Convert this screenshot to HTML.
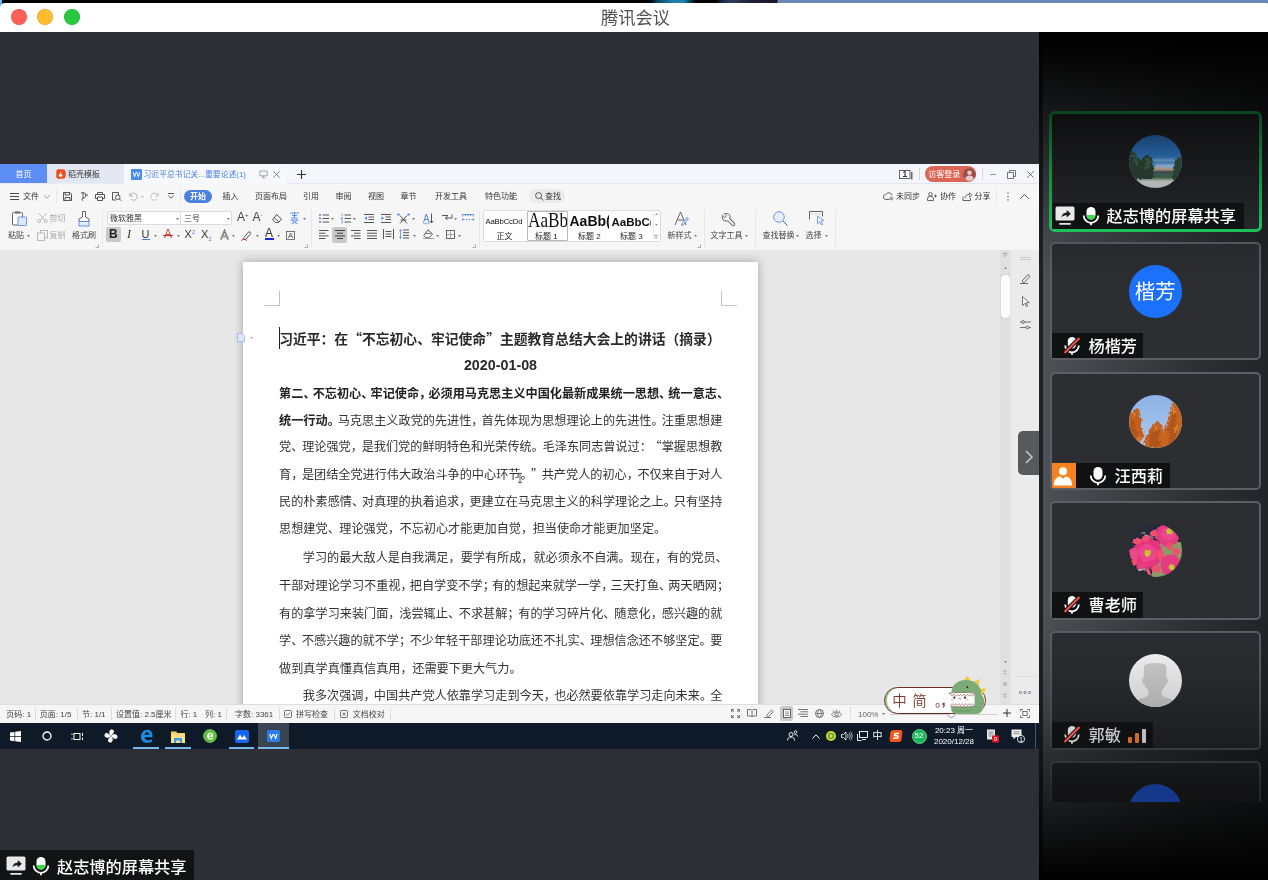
<!DOCTYPE html>
<html lang="zh-CN">
<head>
<meta charset="utf-8">
<title>腾讯会议</title>
<style>
*{box-sizing:border-box;margin:0;padding:0}
html,body{width:1268px;height:880px;overflow:hidden;background:#2e2f34;font-family:"Liberation Sans","Noto Sans CJK SC",sans-serif}
.abs{position:absolute}
#app{position:absolute;left:0;top:0;width:1268px;height:880px;overflow:hidden;background:#2e2f34;will-change:transform}
/* top strip + title bar */
#strip{left:0;top:0;width:1268px;height:3px;background:linear-gradient(90deg,#000 0,#000 650px,#0b4a66 658px,#1a7fa8 672px,#1b86ad 684px,#062c3d 692px,#000 696px,#000 716px,#1d2c48 722px,#2b3c60 732px,#1e2238 750px,#17171f 777px,#6a87b6 778px,#6a87b6 100%)}
#titlebar{left:0;top:3px;width:1268px;height:29px;background:#fff;border-radius:5px 1px 0 0}
.tl{position:absolute;top:6px;width:16px;height:16px;border-radius:50%;box-shadow:inset 0 0 0 .6px rgba(0,0,0,.13)}
#title{left:1.500px;top:1.300px;width:1268px;height:29px;line-height:29px;text-align:center;font-size:17.200px;color:#505050;font-weight:400}
/* shared screen */
#share{left:0;top:164px;width:1039px;height:585px;background:#f5f5f5;overflow:hidden;font-size:8px;color:#333}

/* WPS */
#shin{left:0;top:0;width:1039px;height:585px;overflow:hidden;filter:blur(.4px)}
#share svg{position:absolute;overflow:visible}
#tabbar{left:0;top:0;width:1039px;height:20px;background:#e9ecf5}
#tab1{left:0;top:0;width:47px;height:19px;background:#5d8ef5;color:#fff;text-align:center;line-height:21.500px;font-size:8px}
#tab2{left:47px;top:0;width:77px;height:19px;background:#e3e7f2;line-height:21.500px;font-size:8px;color:#333}
#tab3{left:124px;top:0;width:162px;height:20px;background:#f7f8fc;line-height:22.500px;font-size:7.850px;color:#4a7fe0}
#tabrest{left:286px;top:0;width:753px;height:19.500px;background:#f5f6fb;border-bottom:1px solid #e3e6ef}
#menurow{left:0;top:20px;width:1039px;height:23px;background:#f7f7f7;font-size:8px;line-height:25px;color:#333}
#menurow span.mi{position:absolute;top:0;white-space:nowrap}
#ribbon{left:0;top:43px;width:1039px;height:43px;background:#f6f6f6;font-size:8px;color:#444}
#ribbon .t{position:absolute;white-space:nowrap;line-height:12px}
.vsep{position:absolute;width:1px;background:#e7e7e7}

#docarea{left:0;top:86px;width:1039px;height:454px;background:#e7e7e7;overflow:hidden}
#page{left:243px;top:12px;width:515px;height:460px;background:#fff;box-shadow:0 0 9px rgba(0,0,0,.3)}
.ln{position:absolute;left:36.500px;white-space:nowrap;font-size:12.150px;line-height:20px;height:20px;color:#333;font-family:"Liberation Sans","Noto Sans CJK SC",sans-serif}
.ln b{font-weight:bold;color:#222}
.ln i,.ln u{font-family:"Noto Sans CJK SC",sans-serif;text-decoration:none}
.ln i{font-style:normal;display:inline-block;overflow:visible;white-space:nowrap}
.ln i.r{text-align:right;direction:rtl}

#vscroll{left:1000px;top:86px;width:10px;height:455px;background:#e0e0e0}
#rtool{left:1010px;top:86px;width:29px;height:455px;background:#ebebeb;border-left:1px solid #e4e4e4}
#status{left:0;top:540px;width:1039px;height:19px;background:#f6f6f6;border-top:1px solid #dedede;font-size:8px;line-height:19px;color:#444}
#status span{position:absolute;top:0;white-space:nowrap}
#taskbar{left:0;top:559px;width:1039px;height:26px;background:#0e1a28}
#taskbar svg,#status svg{position:absolute}
#collapse{left:1018px;top:266.500px;width:21px;height:44px;background:#58595b;border-radius:5px 0 0 5px}
/* side panel */

#side{left:1039px;top:32px;width:229px;height:848px;background:linear-gradient(90deg,#4e5156 0,#4c4f54 4%,#3d3f43 38%,#2e3033 68%,#222427 100%);overflow:hidden}
#sideedge{left:0;top:0;width:4px;height:848px;background:#1f2225}
#list{left:0;top:0;width:229px;height:770px;overflow:hidden}
.tile{position:absolute;left:11px;width:211px;height:118.500px;border:2px solid #5c6066;border-radius:5px;background:#2d2e32;overflow:hidden}
.tc .av{position:absolute;left:77px;top:21px;width:53px;height:53px;border-radius:50%;overflow:hidden}
.tc .nb{position:absolute;left:0;bottom:0;height:25.500px;background:#101113;color:#fff;font-size:16.200px;line-height:27.600px;white-space:nowrap;font-weight:500}
.tc .nb svg{position:absolute}
#list2{left:0;top:0;width:229px;height:770px;overflow:hidden}
.tc{position:absolute;left:13px;width:207px;height:114.500px;margin-top:2px;overflow:hidden}
#fadeT{left:0;top:0;width:229px;height:250px;background:linear-gradient(180deg,#000 0,rgba(0,0,0,.95) 20px,rgba(0,0,0,.7) 78px,rgba(0,0,0,.4) 140px,rgba(0,0,0,.14) 198px,rgba(0,0,0,0) 250px)}
#fadeB{left:0;top:560px;width:229px;height:288px;background:linear-gradient(180deg,rgba(0,0,0,0) 18px,rgba(0,0,0,.12) 88px,rgba(0,0,0,.25) 128px,rgba(0,0,0,.43) 163px,rgba(0,0,0,.63) 210px,#000 288px)}
#botlabel{left:0;top:850px;width:194px;height:30px;background:#121315;color:#fff;font-size:16.200px;line-height:34px;font-weight:500}
#botlabel svg{position:absolute}

</style>
</head>
<body>
<div id="app">
<div id="strip" class="abs"></div>
<div class="abs" style="left:0;top:0;width:1.800px;height:8px;background:linear-gradient(180deg,#62c4f5,#4ba9dc)"></div>
<div id="titlebar" class="abs">
  <div class="tl" style="left:10.5px;background:#fe5f57"></div>
  <div class="tl" style="left:37px;background:#febc2e"></div>
  <div class="tl" style="left:63.5px;background:#28c840"></div>
  <div id="title" class="abs">腾讯会议</div>
</div>
<div id="share" class="abs"><div id="shin" class="abs">

<div id="tabbar" class="abs">
  <div id="tabrest" class="abs"></div>
  <div id="tab1" class="abs">首页</div>
  <div id="tab2" class="abs"><svg style="left:9px;top:4.5px" width="10" height="10" viewBox="0 0 10 10"><path d="M2.2 0.3h4.2a3.3 3.3 0 0 1 3.3 3.3v2.8a3.3 3.3 0 0 1-3.3 3.3H2.2a1.9 1.9 0 0 1-1.9-1.9V2.2A1.9 1.9 0 0 1 2.2 0.3z" fill="#f04b1c"/><path d="M4.6 2.2c.8.9.9 2 .2 3.2 1.2-.2 1.9.4 1.7 1.3-.3 1.1-2.2 1.4-3.3.5-.5-.4-.6-1.1-.2-1.5.7-.7 1.8-1.600 1.600-3.500z" fill="#fff"/></svg><span style="position:absolute;left:21px">稻壳模板</span></div>
  <div id="tab3" class="abs"><svg style="left:6.5px;top:4.5px" width="11" height="11" viewBox="0 0 11 11"><rect width="11" height="11" rx="1" fill="#4b8cf0"/><path d="M2.300 3.200l1.300 4.600 1.600-4.600h.6l1.600 4.600 1.300-4.600" fill="none" stroke="#fff" stroke-width="1"/></svg><span style="position:absolute;left:19.5px">习近平总书记关...重要论述(1)</span>
    <svg style="left:135px;top:6px" width="9" height="9" viewBox="0 0 9 9"><path d="M.8 1h7.400v4.800H.8zM4.500 5.800v1.700M2.800 7.700h3.400" fill="none" stroke="#8a8f99" stroke-width=".8"/></svg>
    <svg style="left:149px;top:6.500px" width="7" height="7" viewBox="0 0 7 7"><path d="M.3.300l6.400 6.400M6.700.3L.3 6.700" stroke="#777" stroke-width=".9"/></svg>
  </div>
  <svg style="left:297px;top:5.500px" width="9" height="9" viewBox="0 0 9 9"><path d="M4.500 0v9M0 4.500h9" stroke="#333" stroke-width="1.100"/></svg>
  <!-- right controls -->
  <svg style="left:899px;top:6px" width="14" height="10" viewBox="0 0 14 10"><rect x=".5" y=".5" width="10.500" height="8" fill="#fff" stroke="#555" stroke-width=".9"/><path d="M12.800 2v7.500" stroke="#555" stroke-width="1.300"/></svg>
  <span class="abs" style="left:902.5px;top:4.800px;font-size:8.500px;line-height:10px;color:#333;font-weight:bold">1</span>
  <div class="vsep" style="left:919px;top:4px;height:12px;background:#d5d8e0"></div>
  <div class="abs" style="left:924.5px;top:2px;width:51.500px;height:16px;border-radius:8px;background:#dc6656;color:#fff;font-size:8px;line-height:18px;padding-left:3.800px">访客登录</div>
  <svg style="left:962.500px;top:3.500px" width="13" height="13" viewBox="0 0 13 13"><circle cx="6.500" cy="6.500" r="6.300" fill="#9c4c48"/><circle cx="6.500" cy="4.800" r="2.300" fill="#e9c9c6"/><path d="M2.300 11.200c0-2.600 1.800-3.800 4.200-3.800s4.200 1.200 4.200 3.800a6.400 6.400 0 0 1-8.400 0z" fill="#e9c9c6"/></svg>
  <div class="vsep" style="left:982px;top:4px;height:12px;background:#d5d8e0"></div>
  <svg style="left:990px;top:9.500px" width="6" height="1" viewBox="0 0 6 1"><path d="M0 .5h6" stroke="#999" stroke-width="1"/></svg>
  <svg style="left:1007px;top:6px" width="9" height="9" viewBox="0 0 9 9"><path d="M2.500 2.500V.5h6v6h-2M.5 2.500h6v6h-6z" fill="none" stroke="#666" stroke-width=".9"/></svg>
  <svg style="left:1026.500px;top:6.500px" width="7" height="7" viewBox="0 0 7 7"><path d="M.3.300l6.400 6.400M6.700.3L.3 6.700" stroke="#666" stroke-width=".9"/></svg>
</div>
<div id="menurow" class="abs">
<svg style="left:10px;top:8.500px" width="9" height="7" viewBox="0 0 9 7"><path d="M0 .5h9M0 3.500h9M0 6.500h9" stroke="#333" stroke-width=".9"/></svg>
<span class="mi" style="left:23px">文件</span>
<svg style="left:44px;top:10.500px" width="6" height="4" viewBox="0 0 6 4"><path d="M.3.300L3 3.300 5.700.3" fill="none" stroke="#888" stroke-width=".8"/></svg>
<div class="vsep" style="left:56px;top:5px;height:14px"></div>
<svg style="left:63px;top:7.500px" width="9" height="9" viewBox="0 0 9 9"><path d="M.5.500h6.500l1.500 1.500v6.500h-8zM2 .5v2.500h4.500V.5M2 8.500V5.500h5v3" fill="none" stroke="#444" stroke-width=".9"/></svg>
<svg style="left:79.500px;top:7.500px" width="9" height="9" viewBox="0 0 9 9"><path d="M1 .8h3.500a3 3 0 0 1 0 5H3M3 .8v5.500M3.200 8.500a1.200 1.200 0 1 1 0-2.400" fill="none" stroke="#444" stroke-width=".9"/><path d="M5 3h3" stroke="#444" stroke-width=".9"/></svg>
<svg style="left:95px;top:7.500px" width="10" height="9" viewBox="0 0 10 9"><path d="M2.500 2.500V.5h5v2M2.500 6.500h-2v-4h9v4h-2M2.500 5h5v3.500h-5z" fill="none" stroke="#444" stroke-width=".9"/></svg>
<svg style="left:111.500px;top:7.500px" width="10" height="9" viewBox="0 0 10 9"><path d="M4 8H.5V.5h6V3" fill="none" stroke="#444" stroke-width=".9"/><circle cx="5.800" cy="5.300" r="2.200" fill="none" stroke="#444" stroke-width=".9"/><path d="M7.400 6.900L9.300 8.800" stroke="#444" stroke-width=".9"/></svg>
<svg style="left:128.500px;top:8px" width="9" height="8" viewBox="0 0 9 8"><path d="M.8 1v3h3M1 4a3.600 3.600 0 1 1 1 3.200" fill="none" stroke="#aaa" stroke-width=".9"/></svg>
<svg style="left:140.5px;top:11.5px" width="3" height="2" viewBox="0 0 3 2"><path d="M0 0h3L1.500 2z" fill="#bbb"/></svg>
<svg style="left:150px;top:8px" width="9" height="8" viewBox="0 0 9 8"><path d="M8.200 1v3h-3M8 4a3.600 3.600 0 1 0-1 3.200" fill="none" stroke="#bbb" stroke-width=".9"/></svg>
<svg style="left:168px;top:9px" width="6" height="6" viewBox="0 0 6 6"><path d="M0 .5h6" stroke="#444" stroke-width=".9"/><path d="M.3 2.500L3 5.300 5.700 2.500" fill="none" stroke="#444" stroke-width=".9"/></svg>
<div class="vsep" style="left:180px;top:5px;height:14px"></div>
<div class="abs" style="left:184px;top:5.500px;width:28px;height:13.500px;border-radius:7px;background:#4a7fe3"></div>
<span class="mi" style="left:190px;color:#fff;font-weight:bold">开始</span>
<span class="mi" style="left:222.5px">插入</span>
<span class="mi" style="left:255px">页面布局</span>
<span class="mi" style="left:303px">引用</span>
<span class="mi" style="left:335.5px">审阅</span>
<span class="mi" style="left:368px">视图</span>
<span class="mi" style="left:400.5px">章节</span>
<span class="mi" style="left:435px">开发工具</span>
<span class="mi" style="left:485px">特色功能</span>
<div class="abs" style="left:529px;top:5px;width:36px;height:14px;border-radius:7px;background:#ebebeb"></div>
<svg style="left:534.500px;top:8px" width="9" height="9" viewBox="0 0 9 9"><circle cx="3.600" cy="3.600" r="3" fill="none" stroke="#444" stroke-width=".9"/><path d="M5.800 5.800L8.500 8.500" stroke="#444" stroke-width=".9"/></svg>
<span class="mi" style="left:545px">查找</span>
<svg style="left:883px;top:7.500px" width="11" height="9" viewBox="0 0 11 9"><path d="M6.500 7.500H3A2.500 2.500 0 0 1 2.800 2.500 3.300 3.300 0 0 1 9 3.500" fill="none" stroke="#555" stroke-width=".9"/><circle cx="8.300" cy="6.500" r="2" fill="#9aa4b5"/></svg>
<span class="mi" style="left:896px">未同步</span>
<svg style="left:927px;top:7.500px" width="10" height="9" viewBox="0 0 10 9"><circle cx="3.500" cy="2.300" r="1.800" fill="none" stroke="#555" stroke-width=".9"/><path d="M.5 8.500V7a3 3 0 0 1 6 0v1.500zM7 4h3M8.500 2.500v3" fill="none" stroke="#555" stroke-width=".9"/></svg>
<span class="mi" style="left:940px">协作</span>
<svg style="left:962px;top:7.500px" width="10" height="9" viewBox="0 0 10 9"><path d="M1 4.500v4h7.500V6" fill="none" stroke="#555" stroke-width=".9"/><path d="M3 6c.3-2.500 2-3.600 4.500-3.600V.8L9.800 3 7.500 5.200V3.800" fill="none" stroke="#555" stroke-width=".9"/></svg>
<span class="mi" style="left:974.500px">分享</span>
<div class="vsep" style="left:996px;top:5px;height:14px"></div>
<svg style="left:1007px;top:7.500px" width="2" height="9" viewBox="0 0 2 9"><circle cx="1" cy="1" r=".7" fill="#444"/><circle cx="1" cy="4.500" r=".7" fill="#444"/><circle cx="1" cy="8" r=".7" fill="#444"/></svg>
<svg style="left:1020px;top:9.500px" width="9" height="5" viewBox="0 0 9 5"><path d="M.3 4.700L4.500.5l4.200 4.200" fill="none" stroke="#444" stroke-width=".9"/></svg>
</div>
<div id="ribbon" class="abs">
<svg style="left:11.5px;top:4px" width="15" height="15" viewBox="0 0 15 15"><rect x=".5" y="1.500" width="10" height="12.500" rx="1" fill="#fff" stroke="#555" stroke-width=".9"/><rect x="3" y=".3" width="5" height="2.400" rx=".6" fill="#777"/><rect x="6" y="6" width="8.500" height="8.500" rx=".8" fill="#dfe9fb" stroke="#5b8de8" stroke-width=".9"/></svg>
<span class="t" style="left:8px;top:23.200px">粘贴</span><svg style="left:26.5px;top:27.5px" width="3" height="2" viewBox="0 0 3 2"><path d="M0 0h3L1.500 2z" fill="#777"/></svg>
<svg style="left:37px;top:6px" width="11" height="10" viewBox="0 0 11 10"><path d="M1.500 0l6 7M9.500 0l-6 7" stroke="#aaa" stroke-width=".8"/><circle cx="2.200" cy="8.200" r="1.500" fill="none" stroke="#aaa" stroke-width=".8"/><circle cx="8.800" cy="8.200" r="1.500" fill="none" stroke="#aaa" stroke-width=".8"/></svg>
<span class="t" style="left:49.500px;top:6.200px;color:#aaa">剪切</span>
<svg style="left:37px;top:22.5px" width="11" height="11" viewBox="0 0 11 11"><rect x="3.500" y=".5" width="7" height="7.500" fill="none" stroke="#aaa" stroke-width=".8"/><rect x=".5" y="3" width="7" height="7.500" fill="#f6f6f6" stroke="#aaa" stroke-width=".8"/></svg>
<span class="t" style="left:49.500px;top:23.200px;color:#aaa">复制</span>
<svg style="left:77.5px;top:3.5px" width="12" height="16" viewBox="0 0 12 16"><path d="M4.500 .5h3v5.500l3.500 2v2.500H1V8l3.500-2z" fill="#fff" stroke="#555" stroke-width=".9"/><rect x="1" y="10.500" width="10" height="4.500" fill="#e4edfc" stroke="#5b8de8" stroke-width=".9"/></svg>
<span class="t" style="left:72px;top:23.200px">格式刷</span>
<svg style="left:95px;top:37px" width="4" height="4" viewBox="0 0 4 4"><path d="M3.500 .5v3h-3" fill="none" stroke="#999" stroke-width=".8"/></svg>
<div class="vsep" style="left:102px;top:3px;height:37px"></div>
<div class="abs" style="left:106.500px;top:4px;width:74.500px;height:14px;background:#fff;border:1px solid #dcdcdc;border-radius:2px 0 0 2px"></div>
<div class="abs" style="left:180px;top:4px;width:52px;height:14px;background:#fff;border:1px solid #dcdcdc;border-radius:0 2px 2px 0"></div>
<span class="t" style="left:110px;top:5.700px;color:#333">微软雅黑</span><svg style="left:175.5px;top:10.5px" width="3" height="2" viewBox="0 0 3 2"><path d="M0 0h3L1.500 2z" fill="#777"/></svg>
<span class="t" style="left:184px;top:5.700px;color:#333">三号</span><svg style="left:226.5px;top:10.5px" width="3" height="2" viewBox="0 0 3 2"><path d="M0 0h3L1.500 2z" fill="#777"/></svg>
<span class="t" style="left:237px;top:3.500px;font-size:12px;color:#444;font-family:'Liberation Sans'">A</span><span class="t" style="left:245px;top:1.500px;font-size:6px;color:#444">+</span>
<span class="t" style="left:252.500px;top:3.500px;font-size:12px;color:#444;font-family:'Liberation Sans'">A</span><span class="t" style="left:260.500px;top:1.500px;font-size:6px;color:#444">-</span>
<svg style="left:271.5px;top:6.5px" width="10" height="9" viewBox="0 0 10 9"><path d="M4.500 .6l5 4.400-3 3.500H3.500L.6 5.800z" fill="none" stroke="#444" stroke-width=".9"/><path d="M2.200 3.800l4.600 4" stroke="#444" stroke-width=".9"/></svg>
<svg style="left:289px;top:5px" width="11" height="12" viewBox="0 0 11 12"><path d="M1 1h9M3 3.500h5M2 6h7M5.500 0v6M1.500 8h8M3 8c.6 2 3.600 3 5.500 3.500M8 8c-.6 2-3.600 3-5.500 3.500" fill="none" stroke="#3b7be3" stroke-width=".8"/></svg>
<svg style="left:302.5px;top:10.5px" width="3" height="2" viewBox="0 0 3 2"><path d="M0 0h3L1.500 2z" fill="#777"/></svg>
<svg style="left:304px;top:37px" width="4" height="4" viewBox="0 0 4 4"><path d="M3.500 .5v3h-3" fill="none" stroke="#999" stroke-width=".8"/></svg>
<div class="vsep" style="left:311px;top:3px;height:37px"></div>
<div class="abs" style="left:106px;top:19.500px;width:15px;height:15.500px;background:#c9c9c9;border-radius:2px"></div>
<span class="t" style="left:109px;top:20.500px;font-size:12px;line-height:13px;font-weight:bold;color:#222;font-family:'Liberation Sans'">B</span>
<span class="t" style="left:127px;top:20.500px;font-size:12px;line-height:13px;font-style:italic;color:#333;font-family:'Liberation Serif'">I</span>
<span class="t" style="left:141.500px;top:20.500px;font-size:11px;line-height:13px;color:#333;font-family:'Liberation Sans'">U</span><div class="abs" style="left:141.500px;top:32px;width:8px;height:1px;background:#3b7be3"></div><svg style="left:153.5px;top:27.5px" width="3" height="2" viewBox="0 0 3 2"><path d="M0 0h3L1.500 2z" fill="#777"/></svg>
<span class="t" style="left:164px;top:20.500px;font-size:12px;line-height:13px;color:#c8372d;font-family:'Liberation Sans'">A</span><div class="abs" style="left:163px;top:27.500px;width:10px;height:1px;background:#c8372d"></div><svg style="left:176.5px;top:27.5px" width="3" height="2" viewBox="0 0 3 2"><path d="M0 0h3L1.500 2z" fill="#777"/></svg>
<span class="t" style="left:184.500px;top:21px;font-size:11px;line-height:13px;color:#333;font-family:'Liberation Sans'">X</span><span class="t" style="left:192px;top:19px;font-size:5.500px;color:#3b7be3">2</span>
<span class="t" style="left:201px;top:21px;font-size:11px;line-height:13px;color:#333;font-family:'Liberation Sans'">X</span><span class="t" style="left:208.500px;top:26px;font-size:5.500px;color:#3b7be3">2</span>
<svg style="left:220px;top:23px" width="9" height="10" viewBox="0 0 9 10"><path d="M.8 9.500L4.500 .8l3.700 8.700M2.200 6.500h4.600" fill="none" stroke="#444" stroke-width="1.600"/><path d="M.8 9.500L4.500 .8l3.700 8.700M2.200 6.500h4.600" fill="none" stroke="#f6f6f6" stroke-width=".5"/></svg><svg style="left:232.0px;top:27.5px" width="3" height="2" viewBox="0 0 3 2"><path d="M0 0h3L1.500 2z" fill="#777"/></svg>
<svg style="left:241px;top:22.5px" width="11" height="11" viewBox="0 0 11 11"><path d="M3 7.500L8 1.500l2 1.700-5 6-2.500.5z" fill="none" stroke="#444" stroke-width=".9"/><path d="M0 10.500c2-1.500 4-1.500 6 0" fill="none" stroke="#c8372d" stroke-width="1"/></svg><svg style="left:255.5px;top:27.5px" width="3" height="2" viewBox="0 0 3 2"><path d="M0 0h3L1.500 2z" fill="#777"/></svg>
<span class="t" style="left:265px;top:19.500px;font-size:12px;line-height:13px;color:#333;font-family:'Liberation Sans'">A</span><div class="abs" style="left:264.500px;top:30.500px;width:9px;height:2px;background:#1b2bd8"></div><svg style="left:277.0px;top:27.5px" width="3" height="2" viewBox="0 0 3 2"><path d="M0 0h3L1.500 2z" fill="#777"/></svg>
<svg style="left:286px;top:23.5px" width="9" height="9" viewBox="0 0 9 9"><rect x=".5" y=".5" width="8" height="8" fill="none" stroke="#555" stroke-width=".8"/><path d="M2.300 7L4.500 2l2.200 5M3.200 5.300h2.600" fill="none" stroke="#555" stroke-width=".8"/></svg>
<svg style="left:319px;top:6.5px" width="10" height="9" viewBox="0 0 10 9"><path d="M3.500 1h6.500M3.500 4.500h6.500M3.500 8h6.500" stroke="#444" stroke-width=".9"/><circle cx="1" cy="1" r=".9" fill="#3b7be3"/><circle cx="1" cy="4.500" r=".9" fill="#3b7be3"/><circle cx="1" cy="8" r=".9" fill="#3b7be3"/></svg><svg style="left:331.0px;top:10.5px" width="3" height="2" viewBox="0 0 3 2"><path d="M0 0h3L1.500 2z" fill="#777"/></svg>
<svg style="left:341px;top:6.5px" width="10" height="9" viewBox="0 0 10 9"><path d="M3.500 1h6.500M3.500 4.500h6.500M3.500 8h6.500" stroke="#444" stroke-width=".9"/><path d="M.3 0h1v2M.2 3.500h1.300v1H.2v1h1.300M.2 7h1.300v2H.2" fill="none" stroke="#3b7be3" stroke-width=".6"/></svg><svg style="left:353.0px;top:10.5px" width="3" height="2" viewBox="0 0 3 2"><path d="M0 0h3L1.500 2z" fill="#777"/></svg>
<svg style="left:364px;top:6.5px" width="10" height="9" viewBox="0 0 10 9"><path d="M0 .5h10M4.500 3h5.500M4.500 5.500h5.500M0 8.500h10" stroke="#444" stroke-width=".9"/><path d="M3 2.500L.5 4.300 3 6z" fill="#3b7be3"/></svg>
<svg style="left:381px;top:6.5px" width="10" height="9" viewBox="0 0 10 9"><path d="M0 .5h10M4.500 3h5.500M4.500 5.500h5.500M0 8.500h10" stroke="#444" stroke-width=".9"/><path d="M.5 2.500L3 4.300.5 6z" fill="#3b7be3"/></svg>
<svg style="left:397px;top:5.5px" width="13" height="11" viewBox="0 0 13 11"><path d="M3 2.500l7 8M10 2.500l-7 8M3.500 7h6" fill="none" stroke="#444" stroke-width=".9"/><path d="M0 1.500h3M13 1.500h-3M1.800 .3L.3 1.500l1.500 1.200M11.200 .3l1.500 1.200-1.500 1.200" fill="none" stroke="#3b7be3" stroke-width=".7"/></svg><svg style="left:412.0px;top:10.5px" width="3" height="2" viewBox="0 0 3 2"><path d="M0 0h3L1.500 2z" fill="#777"/></svg>
<svg style="left:422.5px;top:5.5px" width="11" height="11" viewBox="0 0 11 11"><path d="M.5 9.500L3.300 1l2.800 8.500M1.500 6.500h3.600" fill="none" stroke="#3b7be3" stroke-width=".9"/><path d="M8.500 .5v9.500M6.800 8l1.700 2 1.700-2" fill="none" stroke="#444" stroke-width=".9"/><path d="M.3 10.700h5.900" stroke="#3b7be3" stroke-width=".6"/></svg>
<svg style="left:441.5px;top:7px" width="10" height="8" viewBox="0 0 10 8"><path d="M0 1.500h6M10 4H3.500M5.500 2l-2 2 2 2M10 .5v3.500" fill="none" stroke="#444" stroke-width=".9"/></svg><svg style="left:454.0px;top:10.5px" width="3" height="2" viewBox="0 0 3 2"><path d="M0 0h3L1.500 2z" fill="#777"/></svg>
<svg style="left:462px;top:7px" width="12" height="7" viewBox="0 0 12 7"><path d="M.5 2.500V.5h11v2M3.500 .5v1.500M6 .5v1.500M8.500 .5v1.500M.5 5.500h2M4 5.500h1.500M6.500 5.500h1.500M9.500 5.500h2M.5 4.500v2M11.500 4.500v2" fill="none" stroke="#3b7be3" stroke-width=".8"/></svg>
<svg style="left:319px;top:22.8px" width="10" height="9" viewBox="0 0 10 9"><path d="M0 .5h9.500M0 3.200h6.500M0 5.900h9.500M0 8.500h6.500" stroke="#444" stroke-width=".9"/></svg>
<div class="abs" style="left:332px;top:20px;width:15px;height:16px;background:#c9c9c9;border-radius:2px"></div>
<svg style="left:334.5px;top:22.8px" width="10" height="9" viewBox="0 0 10 9"><path d="M0 .5h10M2 3.200h6M0 5.900h10M2 8.500h6" stroke="#333" stroke-width=".9"/></svg>
<svg style="left:351px;top:22.8px" width="10" height="9" viewBox="0 0 10 9"><path d="M0 .5h9.500M3 3.200h6.500M0 5.900h9.500M3 8.500h6.500" stroke="#444" stroke-width=".9"/></svg>
<svg style="left:366.5px;top:22.8px" width="10" height="9" viewBox="0 0 10 9"><path d="M0 .5h10M0 3.200h10M0 5.900h10M0 8.500h10" stroke="#444" stroke-width=".9"/></svg>
<svg style="left:382.5px;top:22.3px" width="11" height="10" viewBox="0 0 11 10"><path d="M.5 0v10M10.500 0v10M2.500 2.500h6M2.500 5h6M2.500 7.500h6" stroke="#444" stroke-width=".9"/></svg>
<svg style="left:399px;top:22.3px" width="10" height="10" viewBox="0 0 10 10"><path d="M4 1h6M4 3.700h6M4 6.300h6M4 9h6" stroke="#444" stroke-width=".9"/><path d="M1.500 .5v9M.2 2L1.500 .5 2.800 2M.2 8l1.300 1.500L2.800 8" fill="none" stroke="#3b7be3" stroke-width=".7"/></svg><svg style="left:412.5px;top:27.5px" width="3" height="2" viewBox="0 0 3 2"><path d="M0 0h3L1.500 2z" fill="#777"/></svg>
<svg style="left:422.5px;top:22.3px" width="11" height="10" viewBox="0 0 11 10"><path d="M5 .8l4.500 4.200-3.500 3.800H3L.8 6.500z" fill="none" stroke="#444" stroke-width=".9"/><path d="M2 4.500h6" stroke="#444" stroke-width=".7"/><path d="M0 9.500h11" stroke="#999" stroke-width=".9"/></svg><svg style="left:436.0px;top:27.5px" width="3" height="2" viewBox="0 0 3 2"><path d="M0 0h3L1.500 2z" fill="#777"/></svg>
<svg style="left:445.5px;top:22.8px" width="9" height="9" viewBox="0 0 9 9"><rect x=".5" y=".5" width="8" height="8" fill="none" stroke="#555" stroke-width=".9"/><path d="M4.500 .5v8M.5 4.500h8" stroke="#888" stroke-width=".7"/></svg><svg style="left:458.0px;top:27.5px" width="3" height="2" viewBox="0 0 3 2"><path d="M0 0h3L1.500 2z" fill="#777"/></svg>
<svg style="left:472px;top:37px" width="4" height="4" viewBox="0 0 4 4"><path d="M3.500 .5v3h-3" fill="none" stroke="#999" stroke-width=".8"/></svg>
<div class="vsep" style="left:479px;top:3px;height:37px"></div>
<div class="abs" style="left:483px;top:3px;width:178px;height:31.500px;background:#fff;border:1px solid #dcdcdc;border-radius:2px"></div>
<span class="t" style="left:485.500px;top:8.500px;font-size:7.700px;color:#111;letter-spacing:-.15px">AaBbCcDd</span><span class="t" style="left:496.500px;top:23.500px;color:#222">正文</span>
<div class="abs" style="left:526.500px;top:3.500px;width:41px;height:30.500px;border:1px solid #b8b8b8;border-radius:1px;overflow:hidden"><span class="t" style="left:.5px;top:-1.200px;font-size:21px;line-height:20px;color:#111;font-family:'Liberation Serif',serif;transform:scaleX(.82);transform-origin:0 0">AaBb</span></div><span class="t" style="left:535px;top:23.500px;color:#222">标题 1</span>
<div class="abs" style="left:569.500px;top:4px;width:39px;height:18px;overflow:hidden"><span class="t" style="left:0;top:3px;font-size:14px;line-height:14px;color:#111;font-weight:bold;font-family:'Liberation Sans'">AaBb(</span></div><span class="t" style="left:578px;top:23.500px;color:#222">标题 2</span>
<div class="abs" style="left:611.500px;top:4px;width:39.500px;height:18px;overflow:hidden"><span class="t" style="left:0;top:3.500px;font-size:11.500px;line-height:14px;color:#111;font-weight:bold;font-family:'Liberation Sans'">AaBbC(</span></div><span class="t" style="left:620px;top:23.500px;color:#222">标题 3</span>
<div class="vsep" style="left:653px;top:4px;height:29px;background:#ececec"></div>
<svg style="left:654.5px;top:6px" width="3" height="2" viewBox="0 0 3 2"><path d="M0 2h3L1.500 0z" fill="#999"/></svg><svg style="left:654.5px;top:17px" width="3" height="2" viewBox="0 0 3 2"><path d="M0 0h3L1.500 2z" fill="#999"/></svg><svg style="left:654px;top:28px" width="4" height="4" viewBox="0 0 4 4"><path d="M0 .4h4" stroke="#888" stroke-width=".7"/><path d="M.5 1.800h3L2 3.800z" fill="#888"/></svg>
<svg style="left:674px;top:4px" width="15" height="15" viewBox="0 0 15 15"><path d="M1 14L6.500 1l5.500 13M3.500 9h6" fill="none" stroke="#555" stroke-width=".9"/><path d="M8 12.500l5-6 1.500 1.300-5 6-2 .5z" fill="#dfe9fb" stroke="#3b7be3" stroke-width=".8"/></svg>
<span class="t" style="left:667.500px;top:23.200px">新样式</span><svg style="left:694.0px;top:27.5px" width="3" height="2" viewBox="0 0 3 2"><path d="M0 0h3L1.500 2z" fill="#777"/></svg>
<svg style="left:697px;top:37px" width="4" height="4" viewBox="0 0 4 4"><path d="M3.500 .5v3h-3" fill="none" stroke="#999" stroke-width=".8"/></svg>
<div class="vsep" style="left:703.500px;top:3px;height:37px"></div>
<svg style="left:721px;top:4.500px" width="15" height="15" viewBox="0 0 15 15"><path d="M5.200 5.200L12.200 12.200" stroke="#555" stroke-width="4" stroke-linecap="round"/><circle cx="5.200" cy="5.200" r="4.300" fill="#555"/><path d="M5.200 5.200L12.200 12.200" stroke="#f6f6f6" stroke-width="2.200" stroke-linecap="round"/><circle cx="5.200" cy="5.200" r="3.400" fill="#f6f6f6"/><path d="M4.800 4.800L0 0" stroke="#f6f6f6" stroke-width="3.400"/><path d="M3 1.200L5.600 3.800 3.800 5.600 1.200 3" fill="none" stroke="#555" stroke-width=".9"/></svg>
<span class="t" style="left:710.500px;top:23.200px">文字工具</span><svg style="left:744.5px;top:27.5px" width="3" height="2" viewBox="0 0 3 2"><path d="M0 0h3L1.500 2z" fill="#777"/></svg>
<div class="vsep" style="left:755px;top:3px;height:37px"></div>
<svg style="left:772.5px;top:4px" width="15" height="15" viewBox="0 0 15 15"><circle cx="6" cy="6" r="5.300" fill="#e6edfb" stroke="#5b8de8" stroke-width=".9"/><path d="M10 10l4.500 4.500" stroke="#555" stroke-width="1"/></svg>
<span class="t" style="left:762.500px;top:23.200px">查找替换</span><svg style="left:796.0px;top:27.5px" width="3" height="2" viewBox="0 0 3 2"><path d="M0 0h3L1.500 2z" fill="#777"/></svg>
<svg style="left:809px;top:4px" width="16" height="15" viewBox="0 0 16 15"><path d="M.5 8.500V.5h13v5" fill="none" stroke="#555" stroke-width=".9"/><path d="M2.500 3h9" stroke="#bbb" stroke-width=".8" stroke-dasharray="1.500 1"/><path d="M8.500 5l6.500 4.500-3 .6 1.800 3.200-1.300.7-1.700-3.200-2.300 2z" fill="#eef3fd" stroke="#5b8de8" stroke-width=".8"/></svg>
<span class="t" style="left:805.500px;top:23.200px">选择</span><svg style="left:824.5px;top:27.5px" width="3" height="2" viewBox="0 0 3 2"><path d="M0 0h3L1.500 2z" fill="#777"/></svg>
<div class="vsep" style="left:834.500px;top:3px;height:37px"></div>
</div>
<div id="docarea" class="abs">
<div id="page" class="abs">
<div class="abs" style="left:21px;top:43px;width:16px;height:1px;background:#c4c4c4"></div><div class="abs" style="left:36px;top:29px;width:1px;height:15px;background:#c4c4c4"></div>
<div class="abs" style="left:478px;top:43px;width:16px;height:1px;background:#c4c4c4"></div><div class="abs" style="left:478px;top:29px;width:1px;height:15px;background:#c4c4c4"></div>
<div class="abs" style="left:36px;top:65px;width:1.300px;height:22px;background:#222"></div><svg style="left:274.800px;top:210.500px" width="4" height="10" viewBox="0 0 4 10"><path d="M0 .4h4M0 9.600h4M2 .4v9.200" fill="none" stroke="#333" stroke-width=".8"/></svg>
<div class="ln" style="left:36.200px;top:66px;font-size:13.800px;font-weight:bold;color:#2a2a2a">习近平：在<u>“</u>不忘初心、牢记使命<u>”</u>主题教育总结大会上的讲话（摘录）</div>
<div class="ln" style="left:36.500px;top:93.300px;width:442px;text-align:center;font-size:14.300px;font-weight:bold;color:#2a2a2a">2020-01-08</div>
<div class="ln" style="left:36.1px;top:121.2px"><b>第二<i style="width:9.30px">、</i>不忘初心<i style="width:9.30px">、</i>牢记使命<i style="width:9.30px">，</i>必须用马克思主义中国化最新成果统一思想<i style="width:9.30px">、</i>统一意志<i style="width:9.30px">、</i></b></div>
<div class="ln" style="left:36.1px;top:147.8px"><b>统一行动<i style="width:10.17px">。</i></b>马克思主义政党的先进性<i style="width:10.17px">，</i>首先体现为思想理论上的先进性<i style="width:10.17px">。</i>注重思想建</div>
<div class="ln" style="left:36.1px;top:174.4px">党<i style="width:10.96px">、</i>理论强党<i style="width:10.96px">，</i>是我们党的鲜明特色和光荣传统<i style="width:10.96px">。</i>毛泽东同志曾说过<i style="width:10.96px">：</i><i class="r" style="width:10.96px">“</i>掌握思想教</div>
<div class="ln" style="left:36.1px;top:201.7px">育<i style="width:10.66px">，</i>是团结全党进行伟大政治斗争的中心环节<i style="width:10.66px">。</i><i style="width:10.66px">”</i>共产党人的初心<i style="width:10.66px">，</i>不仅来自于对人</div>
<div class="ln" style="left:36.1px;top:228.7px">民的朴素感情<i style="width:10.17px">、</i>对真理的执着追求<i style="width:10.17px">，</i>更建立在马克思主义的科学理论之上<i style="width:10.17px">。</i>只有坚持</div>
<div class="ln" style="left:36.1px;top:256.3px">思想建党<i style="width:11.68px">、</i>理论强党<i style="width:11.68px">，</i>不忘初心才能更加自觉<i style="width:11.68px">，</i>担当使命才能更加坚定<i style="width:11.68px">。</i></div>
<div class="ln" style="left:59.8px;top:285.4px">学习的最大敌人是自我满足<i style="width:12.15px">，</i>要学有所成<i style="width:12.15px">，</i>就必须永不自满<i style="width:12.15px">。</i>现在<i style="width:12.15px">，</i>有的党员<i style="width:12.15px">、</i></div>
<div class="ln" style="left:36.1px;top:312.9px">干部对理论学习不重视<i style="width:9.30px">，</i>把自学变不学<i style="width:9.30px">；</i>有的想起来就学一学<i style="width:9.30px">，</i>三天打鱼<i style="width:9.30px">、</i>两天晒网<i style="width:9.30px">；</i></div>
<div class="ln" style="left:36.1px;top:340.5px">有的拿学习来装门面<i style="width:10.96px">，</i>浅尝辄止<i style="width:10.96px">、</i>不求甚解<i style="width:10.96px">；</i>有的学习碎片化<i style="width:10.96px">、</i>随意化<i style="width:10.96px">，</i>感兴趣的就</div>
<div class="ln" style="left:36.1px;top:368.0px">学<i style="width:10.66px">、</i>不感兴趣的就不学<i style="width:10.66px">；</i>不少年轻干部理论功底还不扎实<i style="width:10.66px">、</i>理想信念还不够坚定<i style="width:10.66px">。</i>要</div>
<div class="ln" style="left:36.1px;top:395.5px">做到真学真懂真信真用<i style="width:11.79px">，</i>还需要下更大气力<i style="width:11.79px">。</i></div>
<div class="ln" style="left:59.8px;top:423.1px">我多次强调<i style="width:10.37px">，</i>中国共产党人依靠学习走到今天<i style="width:10.37px">，</i>也必然要依靠学习走向未来<i style="width:10.37px">。</i>全</div>
</div>
<svg style="left:237px;top:82.500px" width="8" height="9" viewBox="0 0 8 9"><path d="M.5.500h4.500l2.500 2.500v5.500h-7z" fill="#dbe7fb" stroke="#8db3f0" stroke-width=".8"/></svg><svg style="left:250px;top:87px" width="3" height="2" viewBox="0 0 3 2"><path d="M0 0h3L1.500 2z" fill="#aaa"/></svg>
</div>
<div id="vscroll" class="abs"><div class="abs" style="left:1px;top:25px;width:8.500px;height:43px;background:#fdfdfd;border-radius:4px;box-shadow:0 0 1px rgba(0,0,0,.25)"></div>
<svg style="left:3px;top:3px" width="4" height="4" viewBox="0 0 4 4"><path d="M0 .4h4" stroke="#888" stroke-width=".8"/><path d="M.3 1.800L2 3.600 3.700 1.800" fill="none" stroke="#888" stroke-width=".7"/></svg>
<svg style="left:3.5px;top:16.5px" width="3" height="2" viewBox="0 0 3 2"><path d="M0 2h3L1.500 0z" fill="#888"/></svg>
<svg style="left:3.5px;top:411px" width="3" height="2" viewBox="0 0 3 2"><path d="M0 0h3L1.500 2z" fill="#888"/></svg>
<svg style="left:3px;top:420px" width="4" height="5" viewBox="0 0 4 5"><path d="M.3 2L2 .3 3.700 2M.3 4.500L2 2.800 3.700 4.500" fill="none" stroke="#888" stroke-width=".7"/></svg>
<svg style="left:3px;top:432px" width="4" height="4" viewBox="0 0 4 4"><circle cx="2" cy="2" r="1.500" fill="none" stroke="#888" stroke-width=".7"/></svg>
<svg style="left:3px;top:443px" width="4" height="5" viewBox="0 0 4 5"><path d="M.3 .5L2 2.200 3.700 .5M.3 3L2 4.700 3.700 3" fill="none" stroke="#888" stroke-width=".7"/></svg>
</div>
<div id="rtool" class="abs">
<svg style="left:9px;top:7px" width="11" height="3" viewBox="0 0 11 3"><path d="M0 .5h11M0 2.500h11" stroke="#bbb" stroke-width=".7"/></svg>
<svg style="left:9px;top:23px" width="11" height="11" viewBox="0 0 11 11"><path d="M2 8l6-6.500 2 1.800-6 6.500z" fill="none" stroke="#555" stroke-width=".9"/><path d="M0 10.500h8" stroke="#555" stroke-width=".9"/></svg>
<svg style="left:11px;top:46px" width="8" height="11" viewBox="0 0 8 11"><path d="M.5.500v9l2.300-2.200 1.600 3.200 1.300-.6-1.600-3.100 3.200-.2z" fill="#f4f4f4" stroke="#555" stroke-width=".8"/></svg>
<svg style="left:9px;top:70px" width="11" height="10" viewBox="0 0 11 10"><path d="M0 2h11M0 7.500h11" stroke="#555" stroke-width=".8"/><circle cx="3" cy="2" r="1.400" fill="#eee" stroke="#555" stroke-width=".8"/><circle cx="7.500" cy="7.500" r="1.400" fill="#eee" stroke="#555" stroke-width=".8"/></svg>
<div class="abs" style="left:2px;top:426px;width:25px;height:1px;background:#dedede"></div><svg style="left:8px;top:440.500px" width="12" height="3" viewBox="0 0 12 3"><circle cx="1.500" cy="1.500" r="1.100" fill="none" stroke="#556" stroke-width=".7"/><circle cx="6" cy="1.500" r="1.100" fill="none" stroke="#556" stroke-width=".7"/><circle cx="10.500" cy="1.500" r="1.100" fill="none" stroke="#556" stroke-width=".7"/></svg>
</div>
<div id="status" class="abs">
<span style="left:6.2px">页码: 1</span>
<span style="left:39.8px">页面: 1/5</span>
<span style="left:82px">节: 1/1</span>
<span style="left:116px">设置值: 2.5厘米</span>
<span style="left:180.4px">行: 1</span>
<span style="left:205px">列: 1</span>
<span style="left:235px">字数: 3361</span>
<span style="left:296px">拼写检查</span>
<span style="left:352.7px">文档校对</span>
<div class="vsep" style="left:35px;top:3px;height:12px;background:#dcdcdc"></div>
<div class="vsep" style="left:77px;top:3px;height:12px;background:#dcdcdc"></div>
<div class="vsep" style="left:110.5px;top:3px;height:12px;background:#dcdcdc"></div>
<div class="vsep" style="left:175px;top:3px;height:12px;background:#dcdcdc"></div>
<div class="vsep" style="left:226px;top:3px;height:12px;background:#dcdcdc"></div>
<div class="vsep" style="left:278.5px;top:3px;height:12px;background:#dcdcdc"></div>
<div class="vsep" style="left:334px;top:3px;height:12px;background:#dcdcdc"></div>
<div class="vsep" style="left:389.5px;top:3px;height:12px;background:#dcdcdc"></div>
<svg style="left:284px;top:5px" width="8" height="8" viewBox="0 0 8 8"><rect x=".5" y=".5" width="7" height="7" rx=".8" fill="none" stroke="#555" stroke-width=".8"/><path d="M2 3.800l1.500 1.500L6 2.500" fill="none" stroke="#555" stroke-width=".8"/></svg>
<svg style="left:340px;top:5px" width="8" height="8" viewBox="0 0 8 8"><rect x=".5" y=".5" width="7" height="7" rx=".8" fill="none" stroke="#555" stroke-width=".8"/><path d="M2.500 2.500l3 3M5.500 2.500l-3 3" fill="none" stroke="#555" stroke-width=".8"/></svg>
<svg style="left:731px;top:3.8px" width="9" height="9" viewBox="0 0 9 9"><path d="M.5 3V.5H3M6 .5h2.500V3M8.500 6v2.500H6M3 8.500H.5V6M.8.800L3 3M8.200.8L6 3M8.200 8.200L6 6M.8 8.200L3 6" fill="none" stroke="#555" stroke-width=".8"/></svg>
<svg style="left:747px;top:4.3px" width="10" height="8" viewBox="0 0 10 8"><path d="M.5.500h3.500l1 1 1-1h3.500v6.500H6L5 8 4 7H.5zM5 1.500V8" fill="none" stroke="#555" stroke-width=".8"/></svg>
<svg style="left:764px;top:3.8px" width="10" height="9" viewBox="0 0 10 9"><path d="M2.500 6.500l5-5.500 1.800 1.600-5 5.500z" fill="none" stroke="#555" stroke-width=".8"/><path d="M0 8.500h7" stroke="#555" stroke-width=".8"/></svg>
<div class="abs" style="left:779.500px;top:0.8px;width:13.500px;height:15px;background:#c9c9c9;border-radius:2px"></div>
<svg style="left:782.5px;top:3.8px" width="8" height="9" viewBox="0 0 8 9"><rect x=".5" y=".5" width="7" height="8" fill="#fff" stroke="#444" stroke-width=".8"/><path d="M2 3h4M2 4.800h4M2 6.500h4" stroke="#444" stroke-width=".6"/></svg>
<svg style="left:798px;top:4.3px" width="10" height="8" viewBox="0 0 10 8"><path d="M0 .5h10M2.500 2.800h7.500M0 5.200h10M2.500 7.500h7.500" stroke="#555" stroke-width=".8"/></svg>
<svg style="left:815px;top:3.8px" width="9" height="9" viewBox="0 0 9 9"><circle cx="4.500" cy="4.500" r="4" fill="none" stroke="#555" stroke-width=".8"/><ellipse cx="4.500" cy="4.500" rx="1.800" ry="4" fill="none" stroke="#555" stroke-width=".7"/><path d="M.5 4.500h8" stroke="#555" stroke-width=".7"/></svg>
<svg style="left:831px;top:3.3px" width="11" height="10" viewBox="0 0 11 10"><path d="M.5 6.500c2.500-3.500 7.500-3.500 10 0-2.500 3.500-7.500 3.500-10 0z" fill="none" stroke="#555" stroke-width=".8"/><circle cx="5.500" cy="6.500" r="1.600" fill="none" stroke="#555" stroke-width=".8"/><path d="M2 2.500l.8 1.300M5.500 1.500v1.500M9 2.500l-.8 1.300" stroke="#555" stroke-width=".7"/></svg>
<div class="vsep" style="left:850px;top:2.3px;height:12px;background:#dcdcdc"></div>
<span style="left:858px;color:#666">100%</span><svg style="left:882.0px;top:7.8px" width="3" height="2" viewBox="0 0 3 2"><path d="M0 0h3L1.500 2z" fill="#777"/></svg>
<div class="abs" style="left:890px;top:8.700px;width:107px;height:1px;background:#d0d0d0"></div>
<svg style="left:948.200px;top:5.700px" width="7" height="7" viewBox="0 0 7 7"><circle cx="3.500" cy="3.500" r="3" fill="#fff" stroke="#888" stroke-width=".8"/></svg>
<svg style="left:1003px;top:4.3px" width="8" height="8" viewBox="0 0 8 8"><path d="M4 0v8M0 4h8" stroke="#333" stroke-width="1"/></svg>
<svg style="left:1019.5px;top:3.8px" width="10" height="9" viewBox="0 0 10 9"><path d="M.5 2.500V.5h2.500M7 .5h2.500v2M9.500 6.500v2H7M3 8.500H.5v-2" fill="none" stroke="#555" stroke-width=".8"/><rect x="2.800" y="2.500" width="4.400" height="4" fill="none" stroke="#555" stroke-width=".8"/></svg>
</div>
<div id="taskbar" class="abs">
<div class="abs" style="left:257.500px;top:0;width:31.500px;height:26px;background:#3a4552"></div>
<div class="abs" style="left:133px;top:24px;width:26px;height:2px;background:#76b9ed"></div>
<div class="abs" style="left:165px;top:24px;width:25.69999999999999px;height:2px;background:#76b9ed"></div>
<div class="abs" style="left:228.8px;top:24px;width:25.5px;height:2px;background:#76b9ed"></div>
<div class="abs" style="left:257.5px;top:24px;width:31.5px;height:2px;background:#76b9ed"></div>
<svg style="left:10px;top:7.5px" width="11" height="11" viewBox="0 0 11 11"><path d="M0 1.500l4.500-.6v4.300H0zM5.200 .8L11 0v5.200H5.200zM0 5.900h4.500v4.300L0 9.600zM5.200 5.900H11V11l-5.800-.8z" fill="#fff"/></svg>
<svg style="left:41.5px;top:8px" width="10" height="10" viewBox="0 0 10 10"><circle cx="5" cy="5" r="4" fill="none" stroke="#fff" stroke-width="1.300"/></svg>
<svg style="left:72px;top:8.5px" width="11" height="9" viewBox="0 0 11 9"><rect x="2" y="1.500" width="6" height="6" fill="none" stroke="#fff" stroke-width="1"/><path d="M0 1.500v1.500M0 6v1.500M10.500 1v3M10.500 5.500v2.500" stroke="#fff" stroke-width="1"/></svg>
<svg style="left:103.5px;top:6px" width="14" height="14" viewBox="0 0 14 14"><g fill="#fff"><path d="M7 7C5 5.500 4.500 2.500 6.500 .8c1.500-.8 3.500 0 3.500 1.700C10 4.500 8 5 7 7z"/><path d="M7 7c1.500-2 4.500-2.500 6.200-.5.800 1.500 0 3.500-1.700 3.500C9.500 10 9 8 7 7z"/><path d="M7 7c2 1.500 2.500 4.500.5 6.200-1.500.8-3.500 0-3.500-1.700C4 9.500 6 9 7 7z"/><path d="M7 7c-1.500 2-4.500 2.500-6.200.5-.8-1.500 0-3.500 1.700-3.500C4.500 4 5 6 7 7z"/></g></svg>
<svg style="left:140px;top:6px" width="13" height="14" viewBox="0 0 13 14"><path d="M1 8.200C1 3.500 4 .8 7.200.8c3.500 0 5.300 2.500 5.300 6v1.500H4.500c.2 2 1.600 3 3.500 3 1.500 0 2.800-.4 4-1.100v2.600c-1.300.7-2.800 1-4.500 1C3.500 13.800 1 11.500 1 8.200zM4.500 5.800h4.800C9.200 4.300 8.500 3.300 7 3.300S4.700 4.300 4.500 5.800z" fill="#1e8be0"/></svg>
<svg style="left:171px;top:6.5px" width="14" height="13" viewBox="0 0 14 13"><path d="M0 1.500h5l1.500 1.500H14v10H0z" fill="#f7d166"/><path d="M0 4.500h14v8.500H0z" fill="#fbe08a"/><path d="M3 8h8v5H3z" fill="#3d9be0"/><path d="M5 10.500h4V13H5z" fill="#fbe08a"/></svg>
<svg style="left:202.5px;top:6px" width="14" height="14" viewBox="0 0 14 14"><circle cx="7" cy="7" r="6.500" fill="#5cc13b"/><circle cx="7" cy="7" r="6.500" fill="none" stroke="#8ee06a" stroke-width=".6"/><path d="M4 7.300C4 5 5.300 3.700 7.200 3.700c2 0 3 1.300 3 3.200v.8H5.800c.2 1 .9 1.500 2 1.500.8 0 1.500-.2 2.100-.6v1.500c-.7.400-1.500.5-2.500.5C5.300 10.600 4 9.300 4 7.300zM5.800 6.400h2.700c0-.8-.5-1.300-1.300-1.300s-1.300.5-1.400 1.300z" fill="#fff"/></svg>
<svg style="left:234.5px;top:6.5px" width="14" height="13" viewBox="0 0 14 13"><rect width="14" height="13" rx="2" fill="#1766f0"/><path d="M2 9.500l3-5 2.200 3.500L9 5l3 4.500z" fill="#fff"/></svg>
<svg style="left:267px;top:7px" width="13" height="12" viewBox="0 0 13 12"><rect width="13" height="12" rx="1.500" fill="#2b7be8"/><path d="M2.800 4l1.500 4.500L6 4.500h1L8.700 8.500 10.200 4" fill="none" stroke="#fff" stroke-width="1.100"/></svg>
<svg style="left:787px;top:7px" width="11" height="11" viewBox="0 0 11 11"><circle cx="4" cy="4.500" r="2" fill="none" stroke="#fff" stroke-width=".9"/><path d="M.5 10.500c0-2.500 1.500-3.500 3.500-3.500s3.500 1 3.500 3.500" fill="none" stroke="#fff" stroke-width=".9"/><circle cx="8.500" cy="2" r="1.300" fill="none" stroke="#fff" stroke-width=".8"/><path d="M7 5c.5-.8 3.500-.8 3.800 1.500" fill="none" stroke="#fff" stroke-width=".8"/></svg>
<svg style="left:811.5px;top:10.5px" width="8" height="5" viewBox="0 0 8 5"><path d="M.5 4.500L4 .8l3.500 3.700" fill="none" stroke="#fff" stroke-width="1"/></svg>
<svg style="left:825.5px;top:8px" width="10" height="10" viewBox="0 0 10 10"><circle cx="5" cy="5" r="5" fill="#d8d23a"/><circle cx="5" cy="5" r="3" fill="#4c9a2a"/><path d="M5 3v4M3 5h4" stroke="#f4ef7a" stroke-width="1"/></svg>
<svg style="left:841px;top:8px" width="11" height="10" viewBox="0 0 11 10"><path d="M.5 3.500h2l2.500-2.500v8l-2.500-2.500h-2z" fill="none" stroke="#fff" stroke-width=".8"/><path d="M6.500 3.200c.8.900.8 2.700 0 3.600M8 1.800c1.500 1.700 1.500 4.700 0 6.400M9.500.6c2 2.300 2 6.500 0 8.800" fill="none" stroke="#fff" stroke-width=".7"/></svg>
<svg style="left:857px;top:8px" width="11" height="10" viewBox="0 0 11 10"><rect x="2.500" y=".5" width="8" height="6" fill="none" stroke="#fff" stroke-width=".9"/><path d="M.5 3v6.500h4M5 8.500h4" fill="none" stroke="#fff" stroke-width=".9"/></svg>
<span class="abs" style="left:872.500px;top:7px;font-size:10px;line-height:12px;color:#fff">中</span>
<svg style="left:890px;top:7px" width="12" height="12" viewBox="0 0 12 12"><rect width="12" height="12" rx="2.500" fill="#f2541b" transform="skewX(-6) translate(.6 0)"/><path d="M9 3.500H5.500c-1.500 0-1.500 2.200 0 2.200h1.500c1.500 0 1.500 2.500 0 2.500H3" fill="none" stroke="#fff" stroke-width="1.500"/></svg>
<svg style="left:911.5px;top:5.5px" width="15" height="15" viewBox="0 0 15 15"><circle cx="7.500" cy="7.500" r="7" fill="#19b857" stroke="#7be0a0" stroke-width=".8"/></svg>
<span class="abs" style="left:911.500px;top:7px;width:15px;text-align:center;font-size:8px;line-height:12px;color:#fff">52</span>
<span class="abs" style="left:930px;top:1.500px;width:48px;text-align:center;font-size:8px;line-height:11px;color:#fff;white-space:nowrap">20:23 周一</span>
<span class="abs" style="left:930px;top:12.500px;width:48px;text-align:center;font-size:8px;line-height:11px;color:#fff;white-space:nowrap">2020/12/28</span>
<svg style="left:986px;top:6px" width="13" height="14" viewBox="0 0 13 14"><path d="M1 .5h8v10H1z" fill="#e8e8e8"/><path d="M2.500 3h5M2.500 5h5M2.500 7h3" stroke="#555" stroke-width=".7"/><rect x="6" y="6.500" width="7" height="7" fill="#e81123"/></svg>
<span class="abs" style="left:992px;top:12.500px;width:7px;text-align:center;font-size:6px;line-height:7px;color:#fff">9</span>
<svg style="left:1011px;top:6px" width="14" height="14" viewBox="0 0 14 14"><path d="M.5 .5h10v7.500H5l-2.500 2.500V8H.5z" fill="#f0f0f0"/><path d="M2.500 2.800h6M2.500 4.800h6" stroke="#666" stroke-width=".7"/><circle cx="10" cy="10" r="3.600" fill="#0e1a2b" stroke="#fff" stroke-width=".8"/></svg>
<span class="abs" style="left:1017.500px;top:12.500px;width:7px;text-align:center;font-size:6.500px;line-height:7px;color:#fff">1</span>
<div class="abs" style="left:1035px;top:0;width:1px;height:26px;background:#4a5560"></div>
</div>
<div class="abs" style="left:884px;top:523px;width:102px;height:27.200px;border-radius:13.600px;background:#fff;border:1px solid #6b2a22;box-shadow:inset 2.500px 0 0 -.5px #9cc795"></div>
<span class="abs" style="left:892.300px;top:525.500px;font-size:14.500px;line-height:20px;color:#7a3a35;white-space:nowrap;letter-spacing:5.400px;font-family:'Noto Sans CJK SC',sans-serif;font-weight:350">中简</span>
<span class="abs" style="left:935px;top:526px;font-size:13.500px;line-height:20px;color:#7a3a35;white-space:nowrap;font-family:'Noto Sans CJK SC',sans-serif;font-weight:400">。</span>
<span class="abs" style="left:941.500px;top:525.500px;font-size:15px;line-height:20px;color:#7a3a35;white-space:nowrap;font-family:'Liberation Sans',sans-serif;font-weight:bold">,</span>
<svg style="left:945px;top:508px" width="45" height="44" viewBox="0 0 45 44"><path d="M22 4l-3.500 5 7-.5zM34 7.200L28.500 10l5 4.500zM40.500 16.700L35 17l2.500 6zM39.500 28L37 25v7z" fill="#f3cf2f" stroke="#d9b01f" stroke-width=".3"/><path d="M6.200 22C6.200 12.500 13 8.100 21 8.100S36 13 36.500 22.500V37c0 3-2.500 5-5.500 5H12c-3 0-5.800-2-5.800-5z" fill="#7dab78"/><path d="M36.500 22c2 2 2.800 6 2.500 10-.3 4-2 8-5 9.500z" fill="#7dab78"/><rect x="4.800" y="20.400" width="24.800" height="14.400" rx="3" fill="#fff"/><path d="M5.500 22.200l1.700 2 1.700-2 1.700 2 1.700-2 1.700 2 1.700-2 1.700 2 1.700-2 1.700 2 1.700-2 1.700 2 1.700-2 1.700 2 1.500-2M5.500 33.600l1.700-2 1.700 2 1.700-2 1.700 2 1.700-2 1.700 2 1.700-2 1.700 2 1.700-2 1.700 2 1.700-2 1.700 2 1.700-2 1.500 2" fill="none" stroke="#6b2a22" stroke-width=".5"/><path d="M5 21.500c3-1.500 20-1.500 24.500 0M5 34.200c3 1 20 1 24.500 0" fill="none" stroke="#6b2a22" stroke-width=".5"/><circle cx="9.300" cy="25.700" r="1.100" fill="#3a2422"/><circle cx="19.900" cy="25.700" r="1.100" fill="#3a2422"/><circle cx="7.300" cy="27.700" r="1.400" fill="#f9cfcf"/><circle cx="22" cy="27.700" r="1.400" fill="#f9cfcf"/><path d="M13 26.300c.5 1 1.300 1 1.700 0 .4 1 1.200 1 1.700 0" fill="none" stroke="#6b2a22" stroke-width=".5"/><circle cx="22.300" cy="15.200" r=".9" fill="#3a2422"/><path d="M3 21.500l2.300-1.200.3 2z" fill="#6d9a68"/><path d="M9 38.500c6 1.200 14 1 19-.8" fill="none" stroke="#5f8d5b" stroke-width=".7"/></svg>
</div><div id="collapse" class="abs"></div>
<svg style="left:1025px;top:286px" width="8" height="14" viewBox="0 0 8 14"><path d="M1 1l6 6-6 6" fill="none" stroke="#c9c9c9" stroke-width="1.500"/></svg>
<!--SHARE-->
</div>
<div id="side" class="abs">
<div id="list" class="abs">
 <div class="tile" style="top:79px;left:10px;width:213px;height:120.500px;border-width:3px;border-radius:6px;border-color:#1fe06a"></div>
 <div class="tile" style="top:209.8px"></div>
 <div class="tile" style="top:339.6px"></div>
 <div class="tile" style="top:469.4px"></div>
 <div class="tile" style="top:599.2px"></div>
 <div class="tile" style="top:729px"></div>
</div>
<div id="sideedge" class="abs"></div>
<div id="fadeT" class="abs"></div>
<div id="fadeB" class="abs"></div>
<div id="list2" class="abs">
 <div class="tc" style="top:80px"><div class="av"><svg width="53" height="53" viewBox="0 0 53 53"><defs><linearGradient id="sk1" x1="0" y1="0" x2="0" y2="1"><stop offset="0" stop-color="#18406f"/><stop offset=".35" stop-color="#245a93"/><stop offset=".62" stop-color="#3f78ae"/></linearGradient><filter id="bl1" x="-10%" y="-10%" width="120%" height="120%"><feGaussianBlur stdDeviation=".8"/></filter><filter id="rg1" x="-10%" y="-10%" width="120%" height="120%"><feTurbulence type="fractalNoise" baseFrequency=".35" numOctaves="2" seed="4" result="n"/><feDisplacementMap in="SourceGraphic" in2="n" scale="5" xChannelSelector="R" yChannelSelector="G"/><feGaussianBlur stdDeviation=".55"/></filter></defs><rect width="53" height="53" fill="url(#sk1)"/><g filter="url(#bl1)"><rect x="24" y="24.500" width="25" height="1.800" fill="#7fa3c8"/><rect x="26" y="29.500" width="21" height="2.600" fill="#9bb8d4"/><rect x="24" y="33" width="23" height="2.200" fill="#c4ac86"/><path d="M28 33l2.600-1.800 2.600 1.800z" fill="#b9544a"/><rect x="24" y="35" width="22" height="3.500" fill="#383d44"/><rect x="0" y="39" width="53" height="6" fill="#3a5a3e"/><rect x="0" y="44.500" width="53" height="9" fill="#b4b8b5"/></g><g filter="url(#rg1)"><path d="M0 16c2-1 4-.5 5 2 2 0 3 2 3 5 2 1 4 0 5 3 1-3 3-6 6-6 3 .5 4.500 4 4.500 8 1 2 1.500 5 .5 8v8H0z" fill="#26392f"/><path d="M53 22c-3-.5-5.500 1-6.500 4-1.500 2-2 5-1.500 8l-2 4v6h10z" fill="#2a3f33"/><path d="M2 20c3-2 5 0 5 4 2 1 3 4 2 8zM17 22c3 0 5 4 5 9l-6 4z" fill="#3c5546" opacity=".8"/></g></svg></div><div class="nb" style="width:191.500px"><svg style="left:3px;top:2.700px" width="20" height="19" viewBox="0 0 20 19"><rect x=".5" y=".5" width="19" height="14" rx="1.500" fill="#e9e9e9"/><path d="M5 17.800h10" stroke="#e9e9e9" stroke-width="1.800" stroke-linecap="round"/><path d="M6.500 11.500c.3-3.300 2.200-5 5.300-5.100V4l4 3.800-4 3.800V9.200c-2.300-.1-4 .6-5.300 2.300z" fill="#1a1a1a"/></svg><svg style="left:29.5px;top:3px" width="18" height="20" viewBox="0 0 18 20"><defs><clipPath id="mc1"><rect x="4.500" y="1" width="9" height="12.500" rx="4.500"/></clipPath></defs><rect x="4.500" y="1" width="9" height="12.500" rx="4.500" fill="#fff"/><rect x="4" y="9" width="10" height="6" fill="#3ddc4a" clip-path="url(#mc1)"/><path d="M1.700 9.500a7.300 7.300 0 0 0 14.600 0" fill="none" stroke="#fff" stroke-width="1.800"/><path d="M9 16.500v2.700" stroke="#fff" stroke-width="1.800"/></svg><span style="position:absolute;left:54.500px">赵志博的屏幕共享</span></div></div>
 <div class="tc" style="top:209.8px"><div class="av" style="background:#1b70fc;color:#fff;font-size:20.400px;line-height:54.500px;text-align:center;font-weight:400;text-indent:-.5px">楷芳</div><div class="nb" style="width:91px"><svg style="left:9.5px;top:3px" width="20" height="20" viewBox="0 0 20 20"><rect x="5.800" y="1" width="8.400" height="11.500" rx="4.200" fill="#fff"/><path d="M3.200 9.500a6.800 6.800 0 0 0 13.600 0" fill="none" stroke="#fff" stroke-width="1.800"/><path d="M10 16.300v2.500" stroke="#fff" stroke-width="1.800"/><path d="M2.500 17L17.500 2" stroke="#101113" stroke-width="4"/><path d="M2.500 17L17.500 2" stroke="#f0524a" stroke-width="2.100"/></svg><span style="position:absolute;left:36.500px">杨楷芳</span></div></div>
 <div class="tc" style="top:339.6px"><div class="av"><svg width="53" height="53" viewBox="0 0 53 53"><defs><linearGradient id="sk2" x1="0" y1="0" x2="0" y2="1"><stop offset="0" stop-color="#8db2e6"/><stop offset="1" stop-color="#aecbf0"/></linearGradient><filter id="bl3" x="-10%" y="-10%" width="120%" height="120%"><feTurbulence type="fractalNoise" baseFrequency=".4" numOctaves="2" seed="7" result="n"/><feDisplacementMap in="SourceGraphic" in2="n" scale="5" xChannelSelector="R" yChannelSelector="G"/><feGaussianBlur stdDeviation=".5"/></filter></defs><rect width="53" height="53" fill="url(#sk2)"/><g filter="url(#bl3)"><path d="M0 20l3.500-4 4.500-3 2 1.500 .8 7 2 2.500-1.200 7 3.200 6.500-.8 6.500-7 4H0z" fill="#c2601e"/><path d="M28.600 25.500l-4.400 4.500-5.500 8-4 8 2.500 7h19l-1.500-15-1.600-8z" fill="#c56422"/><path d="M43.300 8l-1.600 6-2.400 8-.8 5.500-3.200 5.500-1.600 9 2 11H53V14z" fill="#c7651f"/><path d="M2 24l4 3-1 6 4 5-2 6-7-2zM22 36l6-6 3 6-2 8 4 8h-13zM42 16l6 4-2 8 4 6-4 10 2 8h-9l2-12-3-6 4-8z" fill="#a84e18" opacity=".7"/><path d="M4 17l3 2-2 4zM44 12l4 5-5 3zM27 29l3 5-5 2zM46 30l4 4-5 4zM10 40l3 3-4 3z" fill="#e08a3c" opacity=".8"/></g></svg></div><div class="nb" style="width:118px"><div style="position:absolute;left:0;top:0;width:24px;height:25px;background:#f5811f"></div><svg style="left:1px;top:2px" width="20" height="21" viewBox="0 0 20 21"><circle cx="10" cy="6.300" r="4" fill="#fff"/><path d="M.8 20.500c0-5 2-8 6.200-9.300l3 2.600 3-2.600c4.200 1.300 6.200 4.300 6.200 9.300z" fill="#fff"/></svg><svg style="left:36.5px;top:3px" width="18" height="20" viewBox="0 0 18 20"><defs><clipPath id="mc3"><rect x="4.500" y="1" width="9" height="12.500" rx="4.500"/></clipPath></defs><rect x="4.500" y="1" width="9" height="12.500" rx="4.500" fill="#fff"/><rect x="4" y="13" width="10" height="6" fill="#fff" clip-path="url(#mc3)"/><path d="M1.700 9.500a7.300 7.300 0 0 0 14.600 0" fill="none" stroke="#fff" stroke-width="1.800"/><path d="M9 16.500v2.700" stroke="#fff" stroke-width="1.800"/></svg><span style="position:absolute;left:62.500px">汪西莉</span></div></div>
 <div class="tc" style="top:469.4px"><div class="av"><svg width="53" height="53" viewBox="0 0 53 53"><defs><filter id="bl4" x="-10%" y="-10%" width="120%" height="120%"><feTurbulence type="fractalNoise" baseFrequency=".25" numOctaves="2" seed="3" result="n"/><feDisplacementMap in="SourceGraphic" in2="n" scale="4" xChannelSelector="R" yChannelSelector="G"/><feGaussianBlur stdDeviation=".7"/></filter></defs><rect width="53" height="53" fill="#262b3b"/><g filter="url(#bl4)"><path d="M30 18h23v22l-8 13H22z" fill="#8c9c68"/><circle cx="38.600" cy="10.700" r="12" fill="#e43a82"/><circle cx="18.200" cy="29" r="15" fill="#e6357e"/><ellipse cx="5" cy="30" rx="4.500" ry="6" fill="#ea4a86"/><ellipse cx="12" cy="42.500" rx="5" ry="4" fill="#e83c80"/><circle cx="18.500" cy="29" r="9" fill="#ee4f93" opacity=".7"/><circle cx="39" cy="10" r="7" fill="#ee4f93" opacity=".6"/><circle cx="42" cy="42" r="6.500" fill="#ee4f93" opacity=".6"/><circle cx="41.800" cy="41" r="10.500" fill="#e43a82"/><g fill="#f0506e"><ellipse cx="8" cy="17" rx="4.200" ry="3.200"/><ellipse cx="17" cy="14" rx="4" ry="3"/><ellipse cx="24.600" cy="9.500" rx="3.600" ry="3"/><ellipse cx="31.500" cy="31" rx="4" ry="5"/><ellipse cx="26.500" cy="45" rx="4.500" ry="3.500"/><ellipse cx="5" cy="38.500" rx="3" ry="3.500"/><ellipse cx="47.500" cy="27.500" rx="4" ry="3.500"/><ellipse cx="40.600" cy="22" rx="3" ry="3.500"/><ellipse cx="19" cy="47.500" rx="2.200" ry="3.500"/></g><circle cx="18.700" cy="29.500" r="3.400" fill="#c9c232"/><circle cx="40.500" cy="7.200" r="3" fill="#c4bf38"/><circle cx="42.600" cy="43.300" r="3" fill="#c9c23a"/><path d="M13 9l12 5.500M9 46l7.500-1" stroke="#a9aeb0" stroke-width="1.300"/></g></svg></div><div class="nb" style="width:91px"><svg style="left:9.5px;top:3px" width="20" height="20" viewBox="0 0 20 20"><rect x="5.800" y="1" width="8.400" height="11.500" rx="4.200" fill="#fff"/><path d="M3.200 9.500a6.800 6.800 0 0 0 13.600 0" fill="none" stroke="#fff" stroke-width="1.800"/><path d="M10 16.300v2.500" stroke="#fff" stroke-width="1.800"/><path d="M2.500 17L17.500 2" stroke="#101113" stroke-width="4"/><path d="M2.500 17L17.500 2" stroke="#f0524a" stroke-width="2.100"/></svg><span style="position:absolute;left:36.500px">曹老师</span></div></div>
 <div class="tc" style="top:599.2px"><div class="av"><svg width="53" height="53" viewBox="0 0 53 53"><defs><linearGradient id="ga" x1="0" y1="0" x2="0" y2="1"><stop offset="0" stop-color="#ececec"/><stop offset="1" stop-color="#cdcdcd"/></linearGradient><linearGradient id="gp" x1="0" y1="0" x2="0" y2="1"><stop offset="0" stop-color="#c2c2c2"/><stop offset="1" stop-color="#adadad"/></linearGradient></defs><rect width="53" height="53" fill="url(#ga)"/><path d="M15 13.500c0-2 1.500-3.200 4-3.700 4.500-1.200 10-1.200 14.500 0 2.500.5 3.900 1.700 3.900 3.700v10.800c1.300.2 1.800 1.200 1.500 3-.3 2-1 3.200-2.300 3.300-.6 2.600-2.200 4.600-4.100 6.400v2.800c0 1.500 1 2.600 2.800 3.200l8.200 2.800V53H8.500v-7.200l8.200-2.800c1.800-.6 2.800-1.700 2.800-3.200V37c-1.900-1.800-3.500-3.800-4.100-6.400-1.300-.1-2-1.300-2.300-3.300-.3-1.800.2-2.800 1.500-3z" fill="url(#gp)"/></svg></div><div class="nb" style="width:101px;color:#c8c8c8"><svg style="left:9.5px;top:3px" width="20" height="20" viewBox="0 0 20 20"><rect x="5.800" y="1" width="8.400" height="11.500" rx="4.200" fill="#d0d0d0"/><path d="M3.200 9.500a6.800 6.800 0 0 0 13.600 0" fill="none" stroke="#d0d0d0" stroke-width="1.800"/><path d="M10 16.300v2.500" stroke="#d0d0d0" stroke-width="1.800"/><path d="M2.500 17L17.500 2" stroke="#101113" stroke-width="4"/><path d="M2.500 17L17.500 2" stroke="#f0524a" stroke-width="2.100"/></svg><span style="position:absolute;left:36.500px">郭敏</span><svg style="left:75.500px;top:7px" width="18" height="14" viewBox="0 0 18 14"><rect x="0" y="8" width="4" height="6" rx="1" fill="#d2691e"/><rect x="7" y="4" width="4" height="10" rx="1" fill="#d2691e"/><rect x="14" y="0" width="4" height="14" rx="1" fill="#bdbdbd"/></svg></div></div>
 <div class="tc" style="top:729px"><div class="av" style="background:#16388a"></div></div>
</div>
</div>
<div id="botlabel" class="abs"><svg style="left:6px;top:6px" width="20" height="19" viewBox="0 0 20 19"><rect x=".5" y=".5" width="19" height="14" rx="1.500" fill="#e9e9e9"/><path d="M5 17.800h10" stroke="#e9e9e9" stroke-width="1.800" stroke-linecap="round"/><path d="M6.500 11.500c.3-3.300 2.200-5 5.300-5.100V4l4 3.800-4 3.800V9.200c-2.300-.1-4 .6-5.300 2.300z" fill="#1a1a1a"/></svg><svg style="left:32px;top:5.500px" width="18" height="20" viewBox="0 0 18 20"><defs><clipPath id="mc9"><rect x="4.500" y="1" width="9" height="12.500" rx="4.500"/></clipPath></defs><rect x="4.500" y="1" width="9" height="12.500" rx="4.500" fill="#fff"/><rect x="4" y="9" width="10" height="6" fill="#3ddc4a" clip-path="url(#mc9)"/><path d="M1.700 9.500a7.300 7.300 0 0 0 14.600 0" fill="none" stroke="#fff" stroke-width="1.800"/><path d="M9 16.500v2.700" stroke="#fff" stroke-width="1.800"/></svg><span style="position:absolute;left:57px">赵志博的屏幕共享</span></div>
</div>
</body>
</html>
